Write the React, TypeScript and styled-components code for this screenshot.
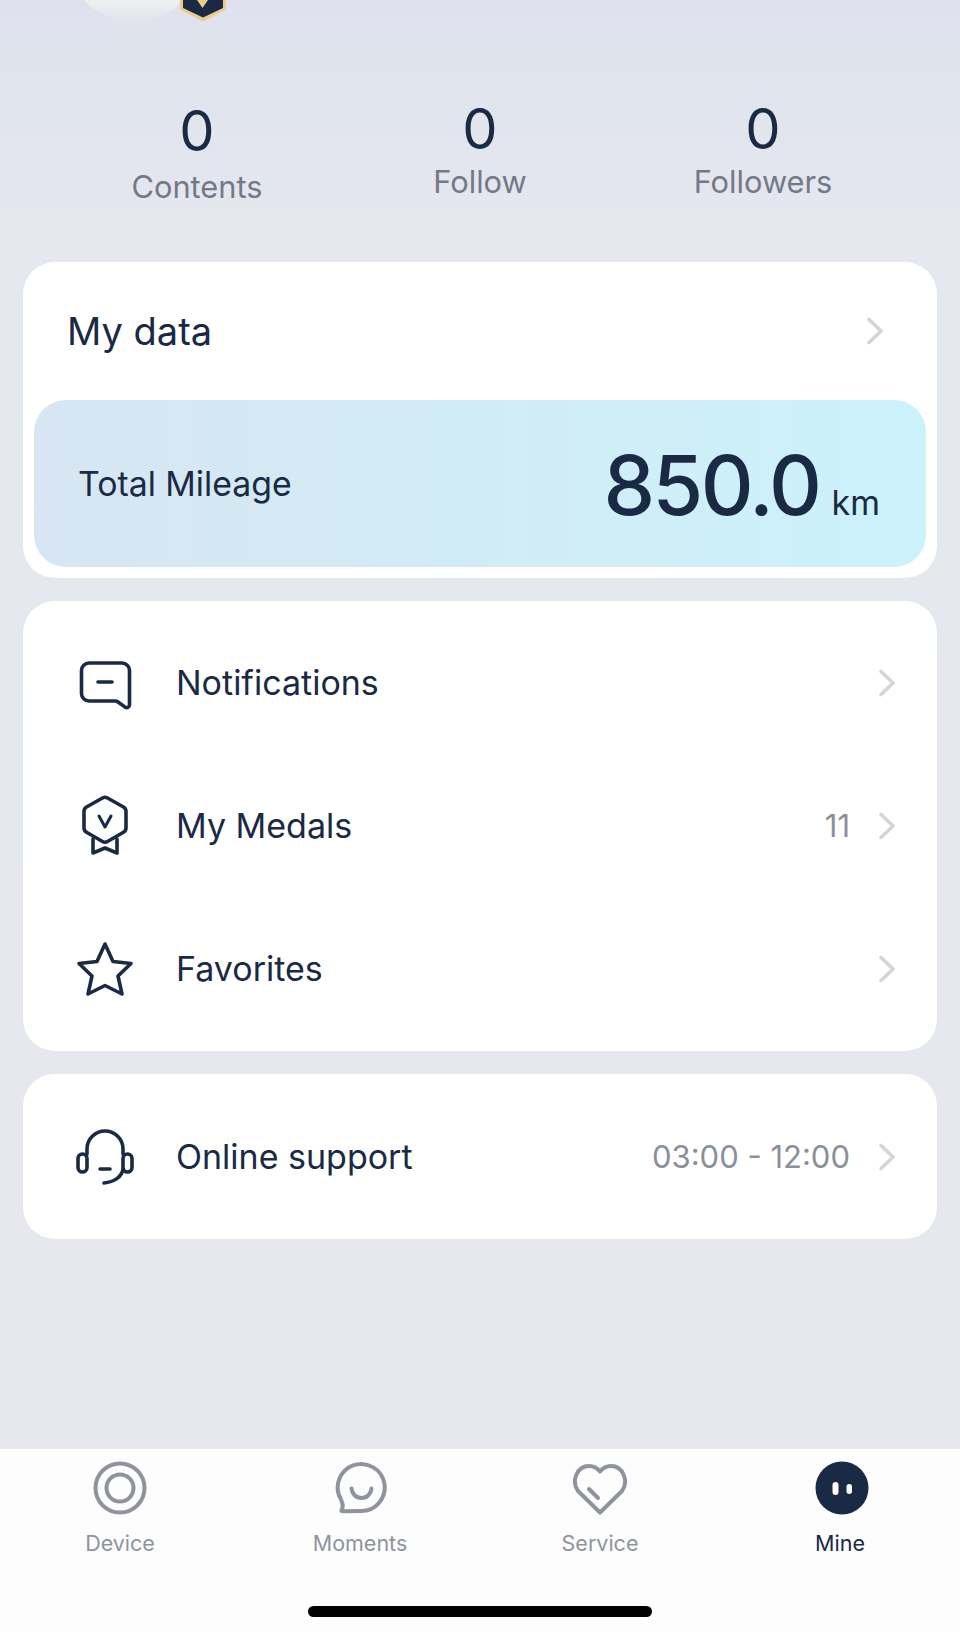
import React from 'react'
import styled, { createGlobalStyle } from 'styled-components'

const GlobalStyle = createGlobalStyle`
    html, body {
        margin: 0;
        padding: 0;
        background: #e6e8ee;
        font-family: Inter, "Noto Sans", "Liberation Sans", sans-serif;
        color: #1a2a44;
    }
    * {
        box-sizing: border-box;
    }
`

const Page = styled.div`
    display: flex;
    flex-direction: column;
    width: 960px;
    height: 1632px;
    overflow: hidden;
    background: linear-gradient(180deg, #dfe2ec 0, #e0e4ed 80px, #e6e8ef 260px, #e6e8ee 100%);
`

const Main = styled.main`
    flex: 1;
    display: flex;
    flex-direction: column;
    gap: 23px;
    padding: 0 23px;
`

const Hero = styled.div`
    height: 22px;
    padding-left: 57px;
`

const Stats = styled.section`
    display: grid;
    grid-template-columns: repeat(3, 283px);
    justify-content: center;
    height: 217px;
    margin: 0 -23px;
    padding-top: 82px;
`

const Stat = styled.div<{ $drop?: number }>`
    display: flex;
    flex-direction: column;
    align-items: center;
    margin-top: ${(p) => p.$drop || 0}px;
`

const StatValue = styled.div`
    font-size: 56px;
    line-height: 50px;
    font-weight: 400;
`

const StatLabel = styled.div<{ $gap?: number }>`
    margin-top: ${(p) => p.$gap || 9}px;
    font-size: 30.8px;
    line-height: 38px;
    color: #747987;
`

const Card = styled.section<{ $pad?: number }>`
    background: #fff;
    border-radius: 32px;
    padding: ${(p) => p.$pad || 0}px;
`

const DataHead = styled.div`
    display: flex;
    align-items: center;
    justify-content: space-between;
    height: 127px;
    padding: 0 42px 12px 33px;
    font-size: 38px;
`

const Mileage = styled.div`
    display: flex;
    align-items: center;
    justify-content: space-between;
    height: 167px;
    padding: 0 46px 0 44px;
    border-radius: 32px;
    background: linear-gradient(90deg, #d7e6f2 0%, #cbf2fb 100%);
`

const MileageLabel = styled.div`
    font-size: 33.8px;
`

const MileageValue = styled.div`
    display: flex;
    align-items: baseline;
    gap: 12px;
    padding-top: 22px;
    font-size: 82px;
    font-weight: 500;
    letter-spacing: -2.5px;
    line-height: 100px;
`

const MileageUnit = styled.span`
    font-size: 34px;
    font-weight: 400;
    letter-spacing: 0;
`

const Menu = styled.div`
    padding: 10px 0 11px;
`

const Row = styled.div<{ $tall?: number }>`
    display: flex;
    align-items: center;
    height: ${(p) => p.$tall || 143}px;
    padding: 0 41px 0 52px;
`

const IconBox = styled.div`
    display: flex;
    align-items: center;
    justify-content: center;
    width: 60px;
    flex-shrink: 0;
    margin-right: 41px;
`

const RowTitle = styled.div`
    flex: 1;
    font-size: 34px;
`

const RowMeta = styled.div`
    margin-right: 28px;
    font-size: 31px;
    color: #8b8f99;
`

const TabBar = styled.nav`
    position: relative;
    display: grid;
    grid-template-columns: repeat(4, 240px);
    height: 183px;
    padding-top: 12px;
    background: #fdfdfe;
`

const Tab = styled.div<{ $active?: boolean }>`
    display: flex;
    flex-direction: column;
    align-items: center;
    color: ${(p) => (p.$active ? '#1a2a44' : '#8f939e')};
    font-size: 21.5px;
`

const TabIcon = styled.div`
    display: flex;
    align-items: center;
    justify-content: center;
    height: 54px;
    margin-bottom: 15px;
`

const HomeBar = styled.div`
    position: absolute;
    left: 308px;
    bottom: 15px;
    width: 344px;
    height: 11px;
    border-radius: 6px;
    background: #000;
`

const Chevron = () => (
    <svg width="18" height="28" viewBox="0 0 18 28" fill="none">
        <path
            d="M3 2.5 L15 14 L3 25.5"
            stroke="#d3d5d9"
            strokeWidth="3.6"
            strokeLinecap="round"
            strokeLinejoin="round"
        />
    </svg>
)

const line = {
    fill: 'none',
    stroke: '#1a2a44',
    strokeWidth: 3.6,
    strokeLinecap: 'round',
    strokeLinejoin: 'round',
} as const

const muted = { ...line, stroke: '#8f939e', strokeWidth: 4 }

const NoticeIcon = () => (
    <svg width="56" height="56" viewBox="0 0 56 56" style={{ marginTop: 6 }}>
        <path
            {...line}
            d="M12 5 H45 a7.5 7.5 0 0 1 7.5 7.5 V47 a2.8 2.8 0 0 1 -4 2.4 L41 44 a5 5 0 0 0 -3 -1 H12 a7.5 7.5 0 0 1 -7.5 -7.5 V12.5 A7.5 7.5 0 0 1 12 5 Z"
        />
        <path {...line} d="M21 24 H35" />
    </svg>
)

const MedalIcon = () => (
    <svg width="56" height="62" viewBox="0 0 56 62">
        <path
            {...line}
            d="M25.5 3 a5 5 0 0 1 5 0 L46.5 12 a5 5 0 0 1 2.5 4.3 V33 a5 5 0 0 1 -2.5 4.3 L30.5 46.5 a5 5 0 0 1 -5 0 L9.5 37.3 A5 5 0 0 1 7 33 V16.3 A5 5 0 0 1 9.5 12 Z"
        />
        <path {...line} strokeWidth="3" d="M22 21 L28 32 L34 21" />
        <path {...line} d="M16 44 V58 L28 53 L40 58 V44" />
    </svg>
)

const StarIcon = () => (
    <svg width="58" height="56" viewBox="0 0 58 56">
        <path
            {...line}
            d="M29 3 L37 20.5 L55 22.5 L42 35 L46 53 L29 44.5 L12 53 L16 35 L3 22.5 L21 20.5 Z"
        />
    </svg>
)

const SupportIcon = () => (
    <svg width="58" height="56" viewBox="0 0 58 56">
        <path {...line} d="M11 25 V20 a18 18 0 0 1 36 0 V25" />
        <rect {...line} x="2" y="25" width="9" height="18" rx="4.5" />
        <rect {...line} x="47" y="25" width="9" height="18" rx="4.5" />
        <path {...line} d="M47 40 C46 48 38 53 28 54" />
        <path {...line} d="M24 40 H34" />
    </svg>
)

const DeviceIcon = () => (
    <svg width="54" height="54" viewBox="0 0 54 54">
        <circle {...muted} cx="27" cy="27" r="24.5" />
        <circle {...muted} cx="27" cy="27" r="13.5" />
    </svg>
)

const MomentsIcon = () => (
    <svg width="54" height="54" viewBox="0 0 54 54">
        <path
            {...muted}
            d="M28 50 A23.5 23.5 0 1 0 8 38.5 C9 42 11.5 45 8.5 49 Q8 50.3 10 50.2 Z"
        />
        <path {...muted} d="M18.5 27.5 C19 33 23 37 28.5 37 C34 37 38 33 38.5 27.5" />
    </svg>
)

const ServiceIcon = () => (
    <svg width="56" height="54" viewBox="0 0 56 54">
        <path
            {...muted}
            d="M28 51.5 L6 30 C-1 20 5 5 17 5 C22 5 26 8 28 10.5 C30 8 34 5 39 5 C51 5 57 20 50 30 Z"
        />
        <path {...muted} d="M17 28 L26 37" />
    </svg>
)

const MineIcon = () => (
    <svg width="57" height="54" viewBox="0 0 57 54">
        <circle cx="30" cy="27" r="26.5" fill="#1a2a44" />
        <rect x="20.5" y="21" width="6" height="13" rx="3" fill="#fff" />
        <rect x="34.5" y="23" width="5.5" height="10" rx="2.75" fill="#fff" />
    </svg>
)

const AvatarArt = () => (
    <svg width="150" height="22" viewBox="0 0 150 22">
        <defs>
            <linearGradient id="avatarFade" x1="0" y1="0" x2="0" y2="1">
                <stop offset="0" stopColor="#eff0f1" />
                <stop offset="1" stopColor="#e0e3ec" />
            </linearGradient>
        </defs>
        <path d="M4 0 C16 14 34 22 56 22 C76 22 92 14 102 0 Z" fill="url(#avatarFade)" />
        <path d="M100 0 V9.5 L123 21.5 L146 9.5 V0 Z" fill="#eccb8b" />
        <path d="M103 0 V8 L123 17.5 L143 8 V0 Z" fill="#1a2a44" />
        <path d="M117 0 L122.5 8 L128 0 Z" fill="#eccb8b" />
    </svg>
)

const menu = [
    { icon: <NoticeIcon />, title: 'Notifications' },
    { icon: <MedalIcon />, title: 'My Medals', meta: '11' },
    { icon: <StarIcon />, title: 'Favorites' },
]

const tabs = [
    { icon: <DeviceIcon />, label: 'Device' },
    { icon: <MomentsIcon />, label: 'Moments' },
    { icon: <ServiceIcon />, label: 'Service' },
    { icon: <MineIcon />, label: 'Mine', active: true },
]

export default function App() {
    return (
        <Page>
            <GlobalStyle />
            <Main>
                <div>
                    <Hero>
                        <AvatarArt />
                    </Hero>
                    <Stats>
                        <Stat $drop={2}>
                            <StatValue>0</StatValue>
                            <StatLabel $gap={12}>Contents</StatLabel>
                        </Stat>
                        <Stat>
                            <StatValue>0</StatValue>
                            <StatLabel>Follow</StatLabel>
                        </Stat>
                        <Stat>
                            <StatValue>0</StatValue>
                            <StatLabel>Followers</StatLabel>
                        </Stat>
                    </Stats>
                </div>
                <Card $pad={11}>
                    <DataHead>
                        <span>My data</span>
                        <Chevron />
                    </DataHead>
                    <Mileage>
                        <MileageLabel>Total Mileage</MileageLabel>
                        <MileageValue>
                            850.0
                            <MileageUnit>km</MileageUnit>
                        </MileageValue>
                    </Mileage>
                </Card>
                <Card>
                    <Menu>
                        {menu.map((item) => (
                            <Row key={item.title}>
                                <IconBox>{item.icon}</IconBox>
                                <RowTitle>{item.title}</RowTitle>
                                {item.meta && <RowMeta>{item.meta}</RowMeta>}
                                <Chevron />
                            </Row>
                        ))}
                    </Menu>
                </Card>
                <Card>
                    <Row $tall={165}>
                        <IconBox>
                            <SupportIcon />
                        </IconBox>
                        <RowTitle>Online support</RowTitle>
                        <RowMeta>03:00 - 12:00</RowMeta>
                        <Chevron />
                    </Row>
                </Card>
            </Main>
            <TabBar>
                {tabs.map((tab) => (
                    <Tab key={tab.label} $active={tab.active}>
                        <TabIcon>{tab.icon}</TabIcon>
                        {tab.label}
                    </Tab>
                ))}
                <HomeBar />
            </TabBar>
        </Page>
    )
}
